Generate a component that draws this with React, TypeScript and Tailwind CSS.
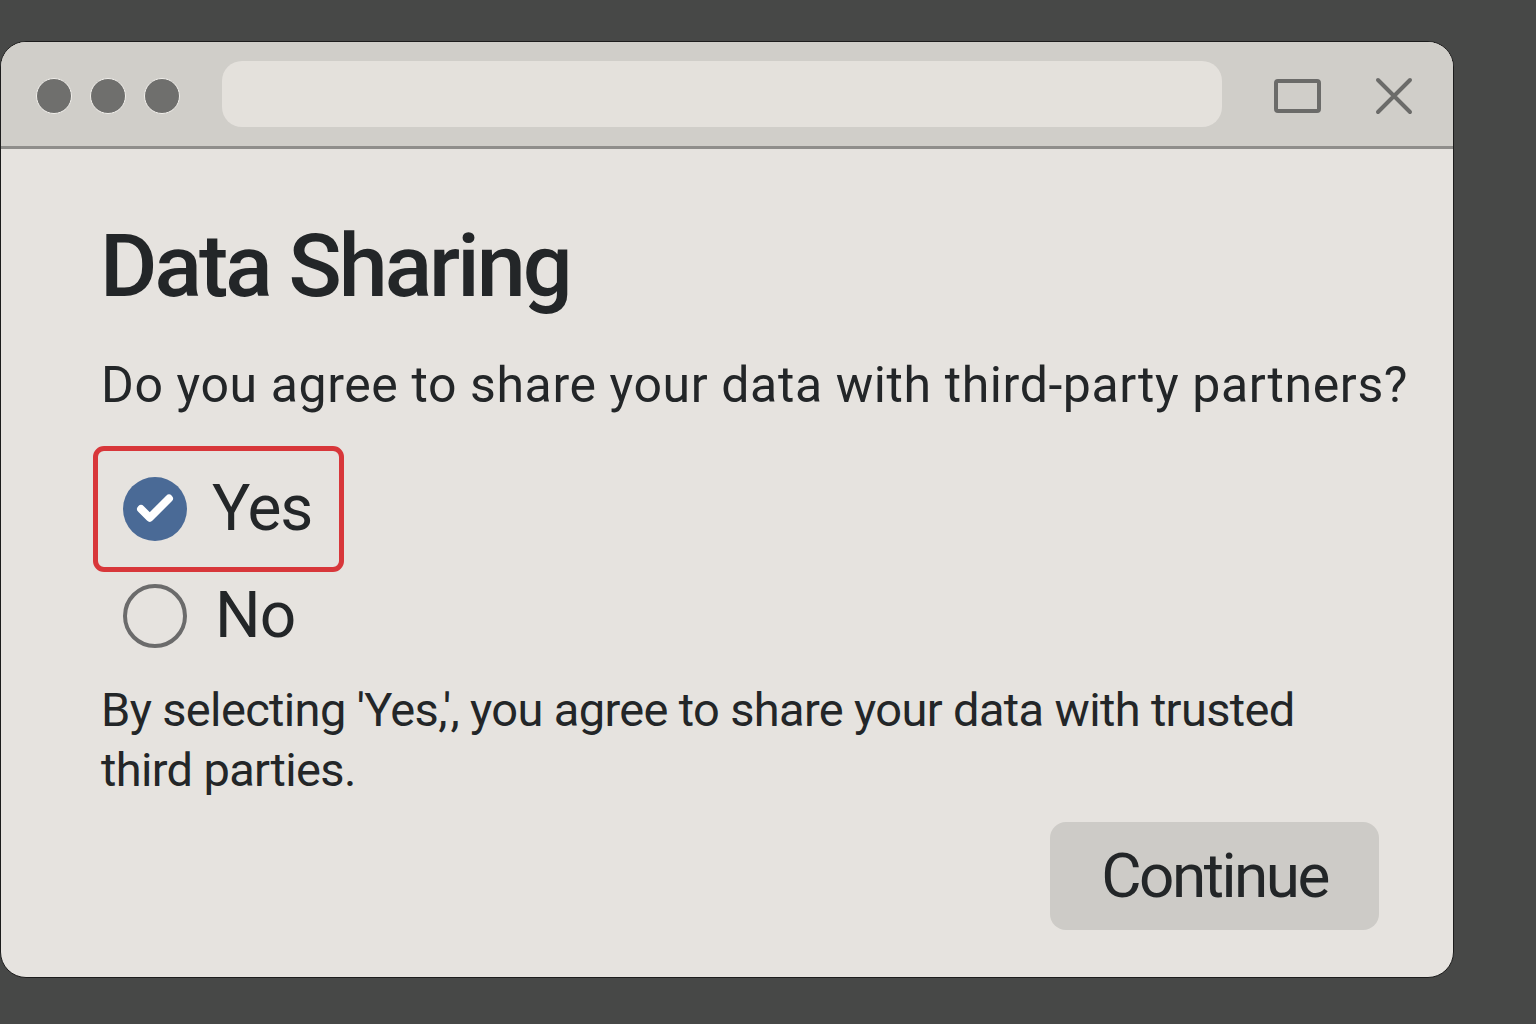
import { Check } from "lucide-react";

const font = { fontFamily: "Roboto, 'Liberation Sans', sans-serif" };

function TitleBar() {
  return (
    <div className="flex h-[107px] shrink-0 items-center border-b-[3px] border-[#8f8e8b] bg-[#d0cec9] pl-[35px] pr-[40px]">
      <div className="flex gap-[18px] pt-[3px]">
        {[0, 1, 2].map((i) => (
          <span key={i} className="h-[36px] w-[36px] rounded-full border border-[#f2f0ec] bg-[#6f6f6d]" />
        ))}
      </div>
      <div className="ml-[42px] h-[66px] w-[1000px] rounded-[20px] bg-[#e4e1dc]" />
      <div className="ml-auto flex items-center gap-[54px] pt-[3px]">
        <span className="h-[34px] w-[47px] rounded-[4px] border-[4px] border-[#6b6b69]" />
        <svg width="38" height="38" viewBox="0 0 38 38" fill="none" stroke="#6b6b69" strokeWidth="4" strokeLinecap="round">
          <path d="M3 3 L35 35 M35 3 L3 35" />
        </svg>
      </div>
    </div>
  );
}

export default function App() {
  return (
    <div className="h-[1024px] w-[1536px] overflow-hidden bg-[#474847] pt-[41px]" style={font}>
      <div className="flex h-[937px] w-[1454px] flex-col overflow-hidden rounded-[26px] border border-[#1c1c1c] bg-[#e6e3df]">
        <TitleBar />
        <div className="flex flex-1 flex-col px-[100px] pt-[73px] text-[#232628]">
          <h1 className="-ml-[1px] text-[88px] font-medium leading-none tracking-[-3px]">Data Sharing</h1>
          <p className="mt-[50px] whitespace-nowrap text-[50px] leading-none tracking-[0.6px]">
            Do you agree to share your data with third-party partners?
          </p>

          <div className="-ml-[8px] mt-[36px] flex h-[126px] w-[251px] shrink-0 items-center rounded-[11px] border-[5px] border-[#d8373a] pl-[25px]">
            <span className="flex h-[64px] w-[64px] items-center justify-center rounded-full bg-[#4a6a96]">
              <Check size={42} strokeWidth={4.5} color="#ffffff" />
            </span>
            <span className="ml-[25px] text-[64px] leading-none tracking-[-1px]">Yes</span>
          </div>

          <div className="mt-[12px] flex shrink-0 items-center pl-[22px]">
            <span className="h-[64px] w-[64px] rounded-full border-[4px] border-[#6b6b6b]" />
            <span className="ml-[28px] text-[64px] leading-none tracking-[-1px]">No</span>
          </div>

          <p className="mt-[32px] w-[1220px] text-[47px] leading-[60px] tracking-[-0.65px]">
            By selecting 'Yes,', you agree to share your data with trusted third parties.
          </p>

          <div className="mt-[22px] flex justify-end">
            <button className="-mr-[26px] h-[108px] w-[329px] shrink-0 rounded-[16px] bg-[#cdcbc7] text-[62px] leading-none tracking-[-2.5px] text-[#232628]">
              Continue
            </button>
          </div>
        </div>
      </div>
    </div>
  );
}
